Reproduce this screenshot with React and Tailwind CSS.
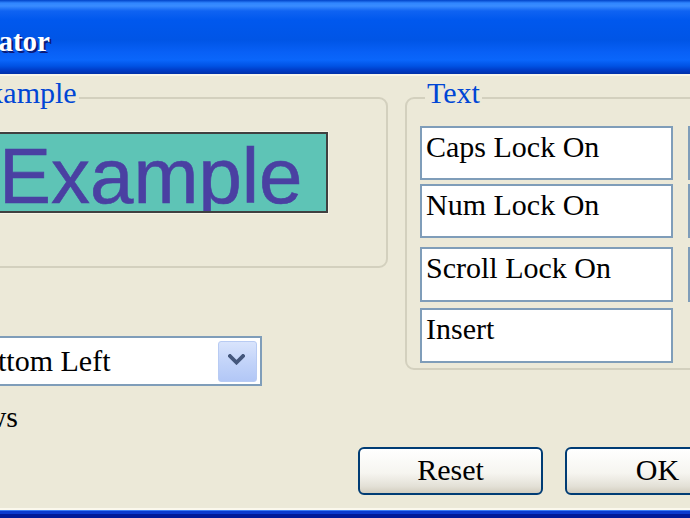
import React from "react";

function Group({ legend, className, children }) {
  return (
    <div className={`relative rounded-[9px] border-2 border-[#D3D0BE] ${className}`}>
      <span className="absolute left-[18px] top-[-23px] bg-[#ECE9D8] px-[2px] text-[30px] leading-[34px] text-[#0046D5] whitespace-nowrap">
        {legend}
      </span>
      {children}
    </div>
  );
}

function Box({ children, h }) {
  return (
    <div
      className={`w-[253px] ${h} shrink-0 border-2 border-[#7F9DB9] bg-white pl-[4px] pt-[2px] text-[30px] leading-[34px] text-black whitespace-nowrap overflow-hidden`}
    >
      {children}
    </div>
  );
}

function Button({ children }) {
  return (
    <div className="w-[185px] h-[48px] shrink-0 rounded-[6px] border-2 border-[#003C74] bg-[linear-gradient(to_bottom,#ffffff_0%,#f6f5f0_55%,#e3e0d6_85%,#d2cdbf_100%)] flex items-center justify-center pb-[3px] text-[30px] leading-[34px] text-black">
      {children}
    </div>
  );
}

export default function App() {
  return (
    <div className="w-[690px] h-[518px] overflow-hidden flex flex-col bg-[#ECE9D8] font-['Liberation_Serif',serif]">
      {/* Title bar */}
      <div className="h-[74px] shrink-0 bg-[linear-gradient(to_bottom,#0042c8_0px,#2f86ff_3px,#3a8cff_6px,#0f63f2_11px,#0058ee_20px,#0055e6_40px,#0860f6_52px,#0a66fb_60px,#0052e4_66px,#003cc8_70px,#0030a8_74px)] pt-[25px]">
        <div className="w-[50px] flex justify-end whitespace-nowrap text-[29px] leading-[32px] font-bold text-white [text-shadow:2px_2px_0_#0a1a78]">
          Lock Key Indicator
        </div>
      </div>

      {/* Body */}
      <div className="flex-1 flex flex-col">
        <div className="h-[2px] bg-[#F8F5E9]" />
        <div className="h-[371px] shrink-0 pt-[21px] flex items-start">
          {/* Left column */}
          <div className="ml-[-52px] w-[440px] shrink-0 flex flex-col">
            <Group legend="Example" className="h-[171px] pt-[33px] pl-[12px]">
              <div className="w-[366px] h-[81px] border-2 border-[#404040] bg-[#5EC4B6] pl-[35px] pt-[3px] overflow-hidden shadow-[0_0_0_1px_#f6f3e6]">
                <span className="font-['Liberation_Sans',Arial,sans-serif] text-[78px] leading-[78px] text-[#4A40A2] whitespace-nowrap [-webkit-text-stroke:0.6px_#4A40A2]">
                  Example
                </span>
              </div>
            </Group>

            <div className="mt-[68px] ml-[6px] w-[308px] h-[50px] border-2 border-[#7F9DB9] bg-white flex items-center">
              <div className="flex-1 pl-[7px] text-[30px] leading-[34px] text-black whitespace-nowrap">
                Bottom Left
              </div>
              <div className="w-[39px] h-[41px] mr-[3px] rounded-[3px] border border-[#B8CBF3] bg-[linear-gradient(to_bottom,#d9e4fc,#c3d4f9_50%,#b2c7f6)] flex items-center justify-center pb-[4px] pr-[3px]">
                <svg width="17" height="11" viewBox="0 0 17 11">
                  <polyline
                    points="2,2 8.5,8.5 15,2"
                    fill="none"
                    stroke="#44577c"
                    strokeWidth="3.8"
                    strokeLinecap="square"
                  />
                </svg>
              </div>
            </div>

            <div className="mt-[14px] w-[70px] flex justify-end whitespace-nowrap text-[30px] leading-[34px] text-black">
              Start with Windows
            </div>
          </div>

          {/* Right column */}
          <div className="ml-[17px] shrink-0">
            <Group legend="Text" className="w-[600px] h-[273px] pt-[27px] pl-[13px]">
              <div className="flex flex-col">
                <div className="flex gap-[15px]">
                  <Box h="h-[54px]">Caps Lock On</Box>
                  <Box h="h-[54px]">Caps Lock Off</Box>
                </div>
                <div className="mt-[4px] flex gap-[15px]">
                  <Box h="h-[54px]">Num Lock On</Box>
                  <Box h="h-[54px]">Num Lock Off</Box>
                </div>
                <div className="mt-[9px] flex gap-[15px]">
                  <Box h="h-[55px]">Scroll Lock On</Box>
                  <Box h="h-[55px]">Scroll Lock Off</Box>
                </div>
                <div className="mt-[6px] flex gap-[15px]">
                  <Box h="h-[55px]">Insert</Box>
                </div>
              </div>
            </Group>
          </div>
        </div>

        {/* Buttons */}
        <div className="flex gap-[22px] pl-[358px]">
          <Button>Reset</Button>
          <Button>OK</Button>
        </div>
      </div>

      {/* Bottom frame */}
      <div className="shrink-0 flex flex-col">
        <div className="h-[2px] bg-[#FBF8EC]" />
        <div className="h-[1px] bg-[#3C7CF2]" />
        <div className="h-[3px] bg-[#0A3ACF]" />
        <div className="h-[4px] bg-[#001A98]" />
      </div>
    </div>
  );
}
